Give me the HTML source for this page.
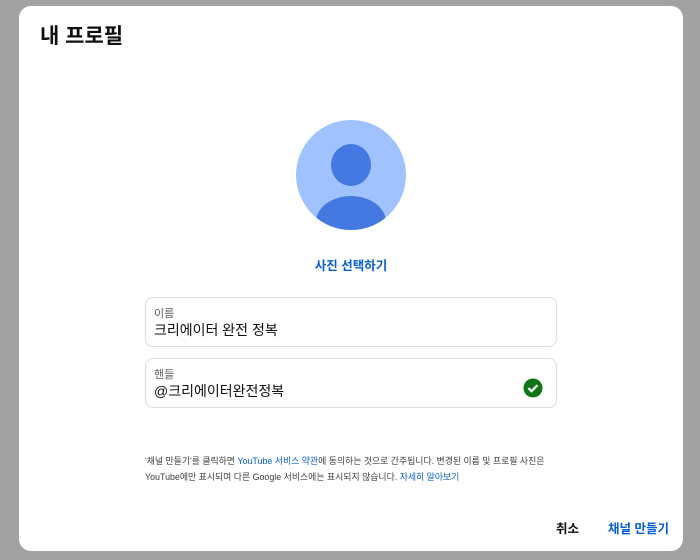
<!DOCTYPE html>
<html><head><meta charset="utf-8"><style>
*{margin:0;padding:0;box-sizing:border-box}
body{width:700px;height:560px;background:#a2a2a2;position:relative;overflow:hidden;font-family:"Liberation Sans","Noto Sans CJK KR",sans-serif;color:#0f0f0f}
.dlg{position:absolute;left:19px;top:6px;width:664px;height:545px;background:#fff;border-radius:12px}
h1{position:absolute;left:21px;top:14px;font-size:21px;font-weight:700;color:#0f0f0f}
.av{position:absolute;left:277px;top:114px}
.pick{position:absolute;left:0;width:664px;text-align:center;top:249px;font-size:12.5px;font-weight:700;color:#065fd4}
.f{position:absolute;left:126px;width:412px;height:50px;border:1px solid #ddd;border-radius:8px}
.f .l{position:absolute;left:8px;top:7px;font-size:11px;color:#606060}
.f .v{position:absolute;left:8px;top:22px;font-size:14px;color:#0f0f0f}
.note{position:absolute;left:126px;top:447px;font-size:8.9px;line-height:16px;color:#404040;width:420px;white-space:nowrap}
.note a{color:#065fd4;text-decoration:none}
.btn{position:absolute;top:512px;font-size:12.5px;font-weight:700}
</style></head><body>
<div class="dlg">
<h1>내 프로필</h1>
<svg class="av" width="110" height="110" viewBox="0 0 110 110" style="left:277px;top:114px">
<defs><clipPath id="c"><circle cx="55" cy="55" r="55"/></clipPath></defs>
<circle cx="55" cy="55" r="55" fill="#a0c3ff"/>
<g clip-path="url(#c)" fill="#4479e1">
<ellipse cx="55" cy="45" rx="20" ry="21"/>
<ellipse cx="55" cy="102" rx="35" ry="26"/>
</g>
</svg>
<div class="pick">사진 선택하기</div>
<div class="f" style="top:291px"><div class="l">이름</div><div class="v">크리에이터 완전 정복</div></div>
<div class="f" style="top:352px"><div class="l">핸들</div><div class="v">@크리에이터완전정복</div>
<svg style="position:absolute;right:13px;top:19px" width="20" height="20" viewBox="0 0 20 20"><circle cx="10" cy="10" r="9.5" fill="#107516"/><path d="M5.5 10.2l3 3 6-6" stroke="#fff" stroke-width="2.2" fill="none"/></svg>
</div>
<div class="note">'채널 만들기'를 클릭하면 <a>YouTube 서비스 약관</a>에 동의하는 것으로 간주됩니다. 변경된 이름 및 프로필 사진은<br>YouTube에만 표시되며 다른 Google 서비스에는 표시되지 않습니다. <a>자세히 알아보기</a></div>
<div class="btn" style="left:537px">취소</div>
<div class="btn" style="left:589px;color:#065fd4">채널 만들기</div>
</div>
</body></html>
